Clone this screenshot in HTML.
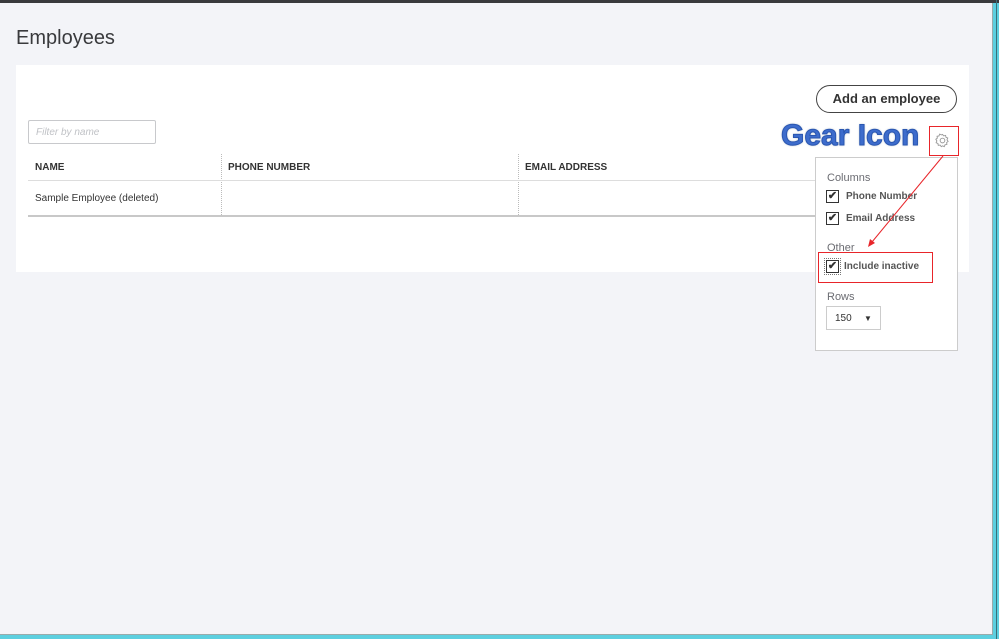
<!DOCTYPE html>
<html><head><style>
body{margin:0;width:999px;height:639px;overflow:hidden;background:#5ccfdf;font-family:"Liberation Sans",sans-serif;position:relative}
.main{position:absolute;left:0;top:0;width:992px;height:634px;background:#f3f4f8;border-right:1px solid #9aa;border-bottom:1px solid #9aa}
.top{position:absolute;left:0;top:0;width:999px;height:3px;background:#393a3d}
.rs{position:absolute;left:996px;top:0;width:1px;height:639px;background:#3a6f78}
h1{position:absolute;left:16px;top:27px;margin:0;font-weight:normal;font-size:20px;color:#393a3d}
.card{position:absolute;left:16px;top:65px;width:953px;height:207px;background:#fff}
.btn{position:absolute;left:816px;top:85px;width:139px;height:26px;border:1.5px solid #444;border-radius:14px;font-size:13px;font-weight:bold;color:#333;text-align:center;line-height:26px;background:#fff}
.filter{position:absolute;left:28px;top:120px;width:126px;height:24px;border:1px solid #c8c9cc;border-radius:2px;font-size:10px;font-style:italic;color:#c0c2c6;line-height:24px;padding-left:7px;box-sizing:border-box;width:128px}
.th{position:absolute;top:162px;font-size:10px;font-weight:bold;color:#333}
.hl{position:absolute;left:28px;width:790px;background:#ddd}
.vl{position:absolute;top:154px;height:61px;border-left:1px dotted #bbb}
.gear{position:absolute;left:781px;top:119px;font-size:30px;font-weight:bold;color:#3d6ccc;-webkit-text-stroke:1px #2a56b0;text-shadow:0 0 2px #9ab}
.red{position:absolute;border:1px solid #e8252a}
.dd{position:absolute;left:815px;top:157px;width:141px;height:192px;background:#fff;border:1px solid #ccc;font-size:11px;color:#333}
.cb{position:absolute;width:11px;height:11px;border:1px solid #333;font-size:11px;line-height:11px;text-align:center;font-weight:bold}
.lbl{position:absolute;font-size:10px;font-weight:bold;color:#555}
.sec{position:absolute;font-size:11px;color:#6b6c72}
</style></head><body>
<div class="main"></div>
<div class="top"></div>
<div class="rs"></div>
<h1>Employees</h1>
<div class="card"></div>
<div class="btn">Add an employee</div>
<div class="filter">Filter by name</div>
<div class="vl" style="left:221px"></div>
<div class="vl" style="left:518px"></div>
<div class="th" style="left:35px">NAME</div>
<div class="th" style="left:228px">PHONE NUMBER</div>
<div class="th" style="left:525px">EMAIL ADDRESS</div>
<div class="hl" style="top:180px;height:1px"></div>
<div style="position:absolute;left:35px;top:193px;font-size:10px;color:#333">Sample Employee (deleted)</div>
<div class="hl" style="top:215px;height:2px;background:#c8c8c8"></div>
<div class="gear">Gear Icon</div>
<div class="red" style="left:929px;top:126px;width:28px;height:28px"></div>
<svg style="position:absolute;left:935px;top:133px" width="15" height="15" viewBox="0 0 16 16"><path d="M8 1.5l1.3 1.6 2-.5.4 2 1.9.8-.8 1.9 1.2 1.7-1.6 1.2.3 2-2 .4-.8 1.9-1.9-.8L6.7 14.5l-1.2-1.6-2 .3-.4-2-1.9-.8.8-1.9L.9 6.7l1.6-1.2-.3-2 2-.4.8-1.9 1.9.8z" fill="none" stroke="#999" stroke-width="1"/><circle cx="8" cy="8" r="2.5" fill="none" stroke="#999"/></svg>
<div class="dd">
<div class="sec" style="left:11px;top:14px">Columns</div>
<div class="cb" style="left:10px;top:32px">✔</div><div class="lbl" style="left:30px;top:33px">Phone Number</div>
<div class="cb" style="left:10px;top:54px">✔</div><div class="lbl" style="left:30px;top:55px">Email Address</div>
<div class="sec" style="left:11px;top:84px">Other</div>
<div class="cb" style="left:10px;top:102px;outline:1px dotted #777;outline-offset:1px">✔</div><div class="lbl" style="left:28px;top:103px">Include inactive</div>
<div class="sec" style="left:11px;top:133px">Rows</div>
<div style="position:absolute;left:10px;top:148px;width:53px;height:24px;border:1px solid #ccc;font-size:10px;line-height:24px;padding-left:8px;box-sizing:border-box;width:55px">150 <span style="position:absolute;left:37px;font-size:8px">▼</span></div>
</div>
<div class="red" style="left:818px;top:252px;width:113px;height:29px"></div>
<svg style="position:absolute;left:0;top:0" width="999" height="639"><line x1="943" y1="156" x2="872" y2="242" stroke="#e8252a" stroke-width="1"/><path d="M868 247l2-8 5 4z" fill="#e8252a"/></svg>
</body></html>
